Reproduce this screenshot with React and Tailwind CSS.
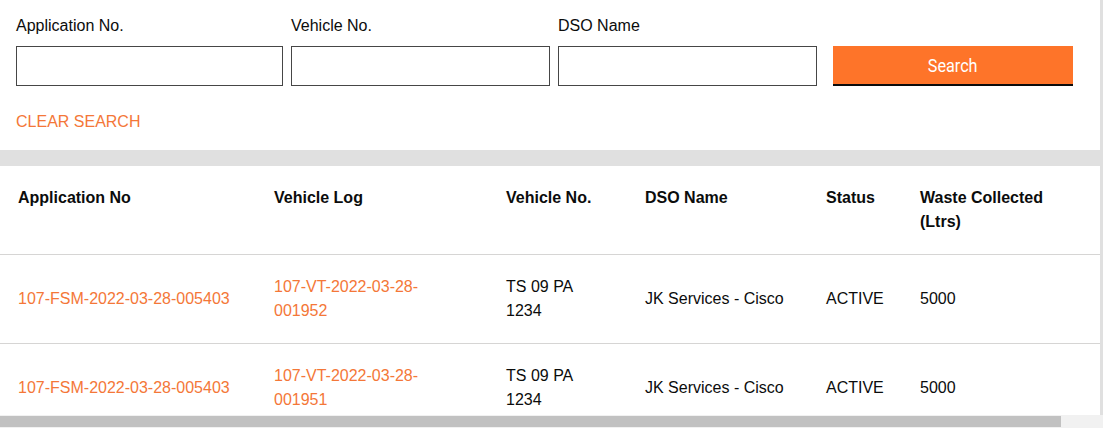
export default function App() {
  const rows = [
    { app: "107-FSM-2022-03-28-005403", log: "107-VT-2022-03-28-001952", veh: "TS 09 PA 1234", dso: "JK Services - Cisco", status: "ACTIVE", waste: "5000" },
    { app: "107-FSM-2022-03-28-005403", log: "107-VT-2022-03-28-001951", veh: "TS 09 PA 1234", dso: "JK Services - Cisco", status: "ACTIVE", waste: "5000" },
  ];
  const c1 = "w-[256px] shrink-0 pl-[18px] pr-[18px]";
  const c2 = "w-[232px] shrink-0 pl-[18px] pr-[50px]";
  const c3 = "w-[139px] shrink-0 pl-[18px] pr-[18px]";
  const c4 = "w-[181px] shrink-0 pl-[18px] pr-[18px]";
  const c5 = "w-[94px] shrink-0 pl-[18px] pr-[10px]";
  const c6 = "w-[220px] shrink-0 pl-[18px] pr-[62px]";
  return (
    <div className="w-[1103px] h-[428px] overflow-hidden bg-[#e0e0e0] flex flex-col font-['Liberation_Sans',Arial,sans-serif] text-[16px] leading-[24px] text-[#0b0c0c]">
      <div className="w-[1100px] h-[150px] shrink-0 bg-white pt-[14px] px-[16px] pb-[16px] flex flex-col">
        <div className="flex items-end">
          <div className="w-[267px] flex flex-col gap-[8px]">
            <span>Application No.</span>
            <div className="h-[40px] border border-[#464646]" />
          </div>
          <div className="w-[259px] ml-[8px] flex flex-col gap-[8px]">
            <span>Vehicle No.</span>
            <div className="h-[40px] border border-[#464646]" />
          </div>
          <div className="w-[259px] ml-[8px] flex flex-col gap-[8px]">
            <span>DSO Name</span>
            <div className="h-[40px] border border-[#464646]" />
          </div>
          <button className="w-[240px] h-[40px] ml-[16px] bg-[#fe7429] shadow-[inset_0_-2px_0_#0b0c0c] text-white font-['Roboto',sans-serif] text-[18px] leading-[24px] flex items-center justify-center">
            <span className="inline-block scale-x-[0.9]">Search</span>
          </button>
        </div>
        <div className="mt-[24px] text-[#f47738]">CLEAR SEARCH</div>
      </div>
      <div className="h-[16px] shrink-0" />
      <div className="w-[1100px] h-[249px] shrink-0 bg-white overflow-hidden">
        <div className="flex items-start py-[20px] font-bold w-[1122px]">
          <div className={c1}>Application No</div>
          <div className={c2}>Vehicle Log</div>
          <div className={c3}>Vehicle No.</div>
          <div className={c4}>DSO Name</div>
          <div className={c5}>Status</div>
          <div className={c6}>Waste Collected (Ltrs)</div>
        </div>
        {rows.map((r, i) => (
          <div key={i} className="flex items-center py-[20px] border-t border-[#d6d5d4] w-[1122px] min-h-[89px]">
            <div className={c1 + " text-[#f47738]"}>{r.app}</div>
            <div className={c2 + " text-[#f47738]"}>{r.log}</div>
            <div className={c3}>{r.veh}</div>
            <div className={c4}>{r.dso}</div>
            <div className={c5}>{r.status}</div>
            <div className={c6}>{r.waste}</div>
          </div>
        ))}
      </div>
      <div className="h-[13px] shrink-0 bg-[#f1f1f1] pt-[1px]">
        <div className="w-[1061px] h-[11px] bg-[#c1c1c1]" />
      </div>
    </div>
  );
}
